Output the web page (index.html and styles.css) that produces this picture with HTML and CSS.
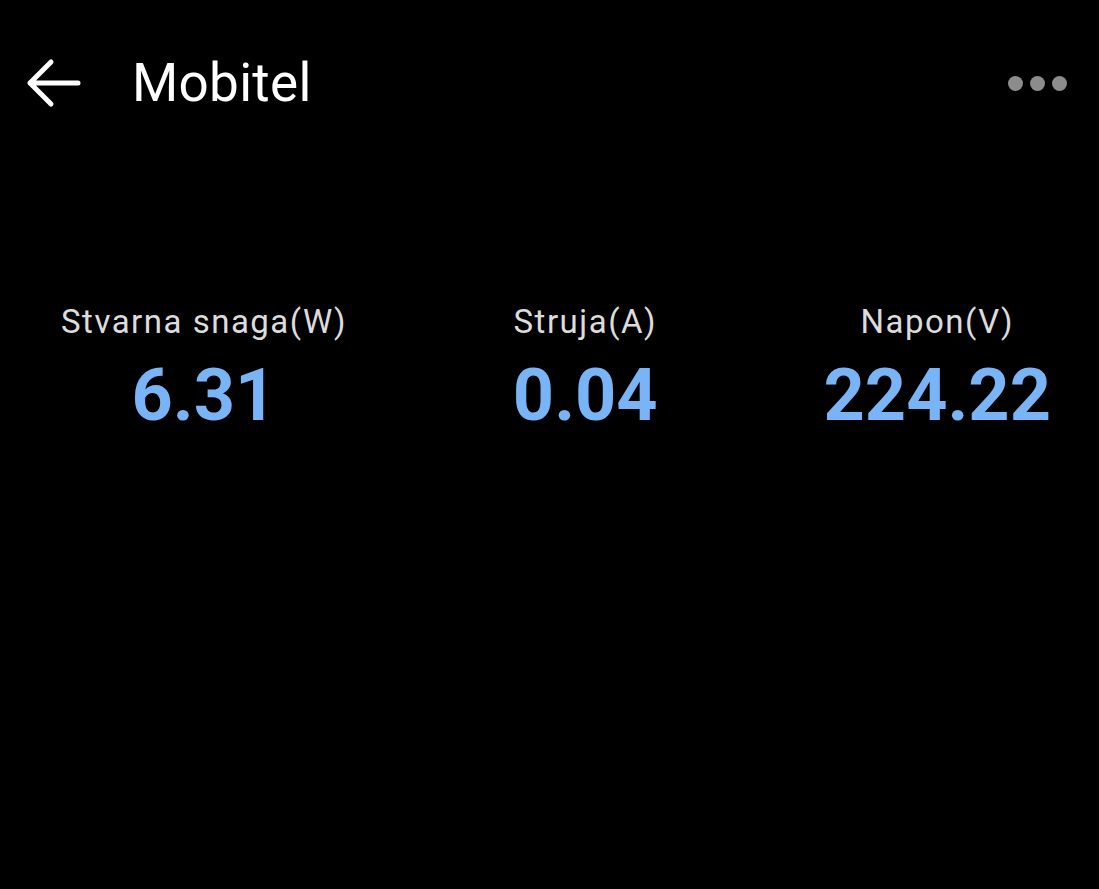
FILE: index.html
```html
<!DOCTYPE html>
<html>
<head>
<meta charset="utf-8">
<link rel="stylesheet" href="styles.css">
</head>
<body>
<div class="app">
  <header class="topbar">
    <svg class="back" width="58" height="52" viewBox="0 0 58 52">
      <path d="M54 26 H6 M27 5 L6 26 L27 47" fill="none" stroke="#ffffff" stroke-width="5" stroke-linecap="round" stroke-linejoin="round"/>
    </svg>
    <h1 class="title">Mobitel</h1>
    <div class="more">
      <span class="dot"></span><span class="dot"></span><span class="dot"></span>
    </div>
  </header>
  <main class="stats">
    <div class="stat">
      <div class="label">Stvarna snaga(W)</div>
      <div class="value">6.31</div>
    </div>
    <div class="stat">
      <div class="label">Struja(A)</div>
      <div class="value">0.04</div>
    </div>
    <div class="stat">
      <div class="label">Napon(V)</div>
      <div class="value">224.22</div>
    </div>
  </main>
</div>
</body>
</html>
```
FILE: styles.css
```css
html, body {
  margin: 0;
  padding: 0;
  background: #000000;
}
body {
  width: 1099px;
  height: 889px;
  overflow: hidden;
  font-family: Roboto, "Noto Sans", sans-serif;
  color: #ffffff;
}
.topbar {
  display: flex;
  align-items: center;
  height: 166px;
  padding: 0 32px 0 24px;
  box-sizing: border-box;
}
.back {
  display: block;
}
.title {
  margin: 0 0 0 50px;
  font-weight: 400;
  font-size: 53px;
  letter-spacing: 0.3px;
  flex: 1;
}
.more {
  display: flex;
  gap: 7px;
}
.dot {
  width: 15px;
  height: 15px;
  border-radius: 50%;
  background: #8c8c8c;
}
.stats {
  display: flex;
  justify-content: space-between;
  padding: 132px 48px 0 61px;
}
.stat {
  display: flex;
  flex-direction: column;
  align-items: center;
}
.label {
  font-size: 33px;
  letter-spacing: 1.5px;
  color: #dcdcdc;
  line-height: 48px;
}
.value {
  margin-top: 7px;
  font-size: 72px;
  font-weight: 700;
  color: #78b4f6;
  line-height: 86px;
}
```
